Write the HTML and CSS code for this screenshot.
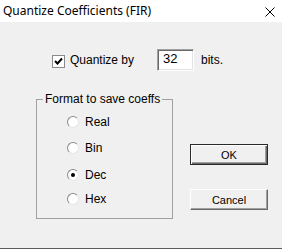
FILE: index.html
```html
<!DOCTYPE html>
<html>
<head>
<meta charset="utf-8">
<link rel="stylesheet" href="styles.css">
</head>
<body>
<div class="window">
  <div class="titlebar">
    <span class="title">Quantize Coefficients (FIR)</span>
    <svg class="close" width="10" height="10" viewBox="0 0 10 10"><path d="M0.5 0.5 L9.5 9.5 M9.5 0.5 L0.5 9.5" stroke="#000" stroke-width="1" fill="none"/></svg>
  </div>
  <div class="client">
    <div class="quant-row">
      <span class="check"><svg width="9" height="9" viewBox="0 0 9 9"><path d="M1 4 L3.5 6.5 L8 1.5" stroke="#000" stroke-width="2" fill="none"/></svg></span>
      <span class="label quant">Quantize by</span>
      <span class="field">32</span>
      <span class="label bits">bits.</span>
    </div>
    <div class="lower">
      <fieldset class="group">
        <legend>Format to save coeffs</legend>
        <div class="options">
          <label class="opt"><span class="radio"></span>Real</label>
          <label class="opt"><span class="radio"></span>Bin</label>
          <label class="opt"><span class="radio on"></span>Dec</label>
          <label class="opt"><span class="radio"></span>Hex</label>
        </div>
      </fieldset>
      <div class="buttons">
        <button class="btn default">OK</button>
        <button class="btn">Cancel</button>
      </div>
    </div>
  </div>
</div>
</body>
</html>
```
FILE: styles.css
```css
* { box-sizing: border-box; }
html, body { margin: 0; padding: 0; }
body { width: 282px; height: 249px; overflow: hidden; font-family: "Liberation Sans", Arial, sans-serif; font-size: 12px; color: #000; white-space: nowrap; }
.window { width: 282px; height: 249px; display: flex; flex-direction: column; }
.titlebar { height: 22px; background: #fff; display: flex; align-items: center; padding-left: 3px; }
.title { font-family: "Noto Sans", sans-serif; font-size: 12px; line-height: 16px; flex: 1; }
.close { margin-right: 7px; margin-top: 2px; }
.client { flex: 1; background: #f0f0f0; border-bottom: 1px solid #5c5c5c; }
.quant-row { display: flex; align-items: flex-start; margin-top: 27px; padding-left: 52px; height: 22px; }
.check { width: 13px; height: 13px; margin-top: 6px; background: #fff; border: 1px solid #8a8a8a; display: flex; align-items: center; justify-content: center; flex: none; }
.label { line-height: 14px; margin-top: 4px; white-space: nowrap; }
.quant { margin-left: 5px; width: 64px; flex: none; }
.field { width: 37px; height: 22px; margin-left: 23px; background: #fff; border: 1px solid; border-color: #a0a0a0 #fff #fff #a0a0a0; box-shadow: inset 1px 1px 0 #696969, inset -1px -1px 0 #e3e3e3; padding: 2px 0 0 5px; line-height: 14px; font-size: 13px; flex: none; }
.bits { margin-left: 7px; }
.lower { display: flex; align-items: flex-start; margin-top: 21px; padding-left: 36px; }
.group { margin: 0; width: 137px; min-width: 0; height: 127px; border: 1px solid #a0a0a0; padding: 0 0 0 6px; flex: none; }
.group legend { padding: 0 2px; margin-left: 0; line-height: 14px; white-space: nowrap; }
.options { display: grid; grid-template-rows: 26px 27px 24px 14px; margin-top: 9px; padding-left: 24px; }
.opt { display: flex; align-items: center; height: 14px; line-height: 14px; }
.radio { width: 12px; height: 12px; border-radius: 50%; background: #fff; border: 1px solid; border-color: #8a8a8a #e6e6e6 #e6e6e6 #8a8a8a; margin-right: 6px; display: flex; align-items: center; justify-content: center; flex: none; }
.radio.on::after { content: ""; width: 4px; height: 4px; border-radius: 50%; background: #000; }
.buttons { display: flex; flex-direction: column; margin-left: 17px; margin-top: 52px; gap: 24px; }
.btn { width: 78px; height: 21px; font-family: "Liberation Sans", Arial, sans-serif; font-size: 11px; color: #000; background: #f0f0f0; border: 1px solid; border-color: #fff #696969 #696969 #fff; box-shadow: inset -1px -1px 0 #a0a0a0; padding: 0; }
.btn.default { border-color: #2a2a2a; box-shadow: inset 1px 1px 0 #fff, inset -1px -1px 0 #696969, inset -2px -2px 0 #a0a0a0; }
```
